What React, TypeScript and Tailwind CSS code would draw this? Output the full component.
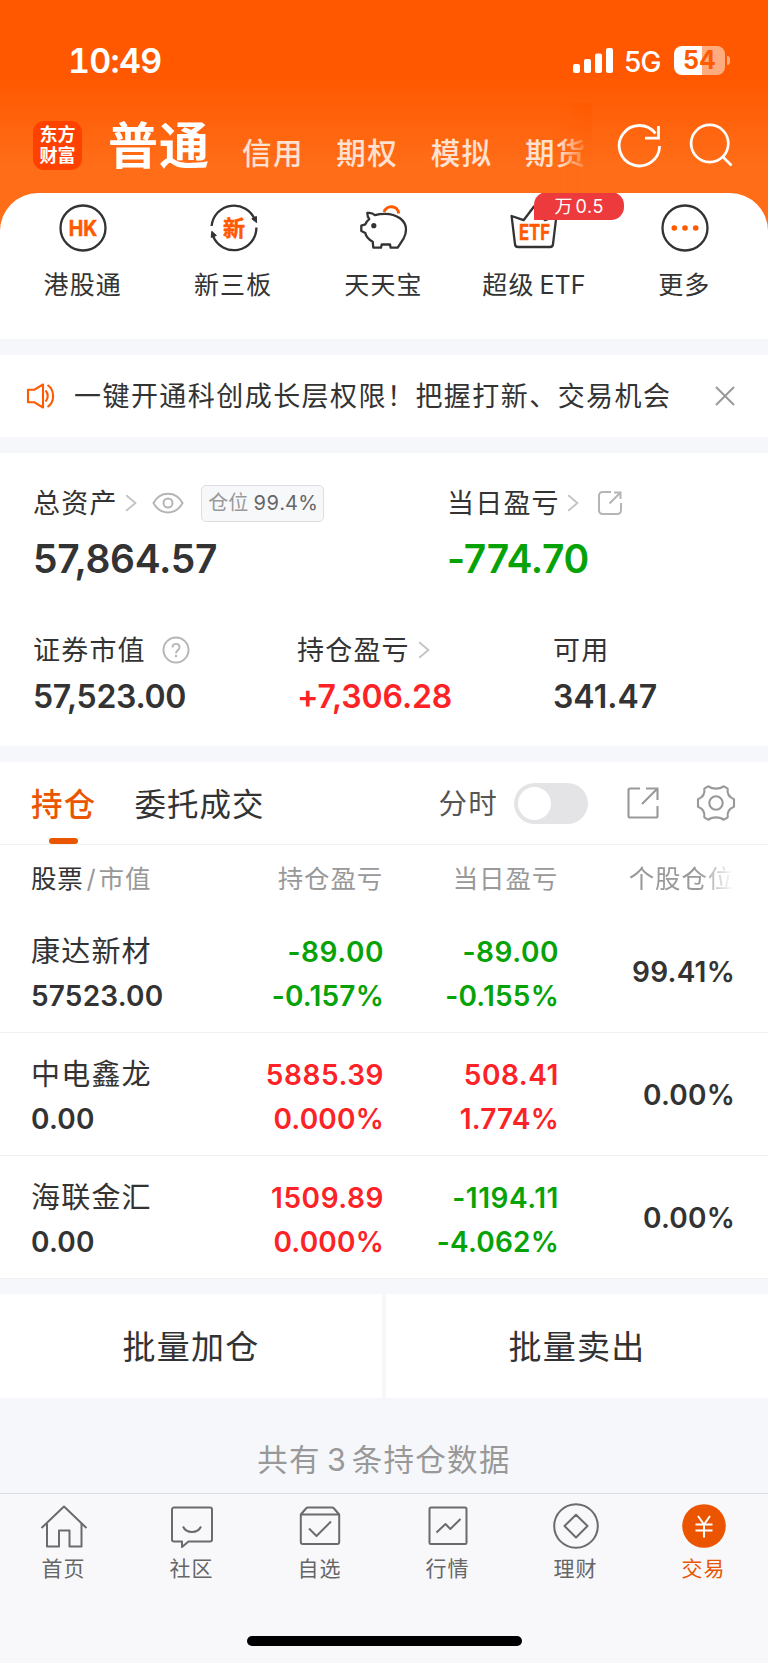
import React from 'react';

type Tone = 'up' | 'down';

const toneClass: Record<Tone, string> = {
  up: 'text-[#fc2226]',
  down: 'text-[#06a206]',
};

const accountTabs = ['信用', '期权', '模拟', '期货'];

const holdings: {
  name: string;
  marketValue: string;
  total: [string, string];
  totalTone: Tone;
  today: [string, string];
  todayTone: Tone;
  ratio: string;
}[] = [
  {
    name: '康达新材',
    marketValue: '57523.00',
    total: ['-89.00', '-0.157%'],
    totalTone: 'down',
    today: ['-89.00', '-0.155%'],
    todayTone: 'down',
    ratio: '99.41%',
  },
  {
    name: '中电鑫龙',
    marketValue: '0.00',
    total: ['5885.39', '0.000%'],
    totalTone: 'up',
    today: ['508.41', '1.774%'],
    todayTone: 'up',
    ratio: '0.00%',
  },
  {
    name: '海联金汇',
    marketValue: '0.00',
    total: ['1509.89', '0.000%'],
    totalTone: 'up',
    today: ['-1194.11', '-4.062%'],
    todayTone: 'down',
    ratio: '0.00%',
  },
];

const Chevron = () => (
  <svg width="12" height="18" viewBox="0 0 12 18" fill="none" stroke="#c4c4c4" strokeWidth="1.9">
    <path d="M1.2 1.2 10.4 9 1.2 16.8" />
  </svg>
);

const iconText = {
  fill: '#ff5a00',
  stroke: '#ff5a00',
  strokeWidth: 0.5,
  textAnchor: 'middle' as const,
  className: "font-['Inter','Noto_Sans_CJK_SC',sans-serif] font-bold",
};

const HkIcon = () => (
  <svg width="50" height="50" viewBox="0 0 50 50" fill="none">
    <circle cx="25" cy="25" r="22.5" stroke="#333" strokeWidth="2.3" />
    <text x="25" y="33" fontSize="21.5" textLength="28.5" lengthAdjust="spacingAndGlyphs" {...iconText}>HK</text>
  </svg>
);

const NewBoardIcon = () => (
  <svg width="50" height="50" viewBox="0 0 50 50" fill="none">
    <path d="M2.6 23A22.5 22.5 0 0 1 46 17M47.4 24.6A22.5 22.5 0 0 1 4 33" stroke="#333" strokeWidth="2.3" />
    <path d="m42.8 15.800 4.600-2.400.2 6.200zM2.800 28.300l4.600 4.200-5.200 1.900z" fill="#333" stroke="#333" />
    <text x="25" y="33" fontSize="22" {...iconText}>新</text>
  </svg>
);

const PiggyIcon = () => (
  <svg width="50" height="50" viewBox="0 0 50 50" fill="none" strokeWidth="2.3" strokeLinejoin="round">
    <path d="M25 9a7.600 7.600 0 0 1 14.800 1.500" stroke="#ff5a00" strokeWidth="3" />
    <path
      d="M16 12.200C14 10.200 11.200 9.500 8.300 10c0 2.200.6 4.300 2 6.200-1.800 1.400-3.200 3-4 5.200l-4 1.300V28l4 2c.7 3.600 3.400 6.500 7.400 8.700l.6 6H22l.7-3.200H31l.7 3.200h7l6-9.400C46.300 32.500 47 29.500 47 26.500 47 17.500 38 10.800 26 10.800c-3.600 0-7 .4-10 1.400z"
      stroke="#333"
    />
    <circle cx="14.800" cy="22.700" r="2.600" fill="#333" />
  </svg>
);

const EtfIcon = () => (
  <svg width="50" height="50" viewBox="0 0 50 50" fill="none">
    <path
      d="M2.600 13 6 41.200a3 3 0 0 0 3 2.800h32a3 3 0 0 0 3-2.800L47.400 13 36 17.200 25 3.500 14.600 17.200z"
      stroke="#333"
      strokeWidth="2.3"
      strokeLinejoin="round"
    />
    <text x="25.500" y="37" fontSize="21.5" textLength="31" lengthAdjust="spacingAndGlyphs" {...iconText}>ETF</text>
  </svg>
);

const MoreIcon = () => (
  <svg width="50" height="50" viewBox="0 0 50 50" fill="none">
    <circle cx="25" cy="25" r="22.5" stroke="#333" strokeWidth="2.3" />
    <circle cx="14.300" cy="25" r="2.8" fill="#ff5a00" />
    <circle cx="25" cy="25" r="2.8" fill="#ff5a00" />
    <circle cx="35.700" cy="25" r="2.8" fill="#ff5a00" />
  </svg>
);

const shortcuts = [
  { icon: HkIcon, label: '港股通' },
  { icon: NewBoardIcon, label: '新三板' },
  { icon: PiggyIcon, label: '天天宝' },
  { icon: EtfIcon, label: '超级', latin: 'ETF', badge: ['万', '0.5'] },
  { icon: MoreIcon, label: '更多' },
];

const HomeIcon = () => (
  <>
    <path d="M1.500 27 24 5.500 46.500 27" />
    <path d="M7 22.500V45.500h12V29.500h10.500v16h12V22.500" />
  </>
);

const CommunityIcon = () => (
  <>
    <path d="M6 6.500h36a2 2 0 0 1 2 2v30a2 2 0 0 1-2 2H20.500L14 46v-5.500H6a2 2 0 0 1-2-2v-30a2 2 0 0 1 2-2z" />
    <path d="M15 25.500c3.400 7.300 14.600 7.300 18 0" />
  </>
);

const WatchlistIcon = () => (
  <>
    <path d="M4.800 13.500 10 7.500q.5-1 1.500-1h25q1 0 1.500 1l5.200 6V41a2 2 0 0 1-2 2H6.800a2 2 0 0 1-2-2zM4.800 13.500h38.400" />
    <path d="m13 27.500 7.500 7.500L35 20.500" />
  </>
);

const MarketIcon = () => (
  <>
    <rect x="5.500" y="6.500" width="37" height="36.500" rx="1.500" />
    <path d="m12.500 31.500 9-8.500 4.800 5L36.500 18" />
  </>
);

const WealthIcon = () => (
  <>
    <circle cx="24" cy="25" r="21.800" />
    <path d="M24 13.800 35.500 25 24 36.500 12.500 25z" />
  </>
);

const TradeIcon = () => (
  <>
    <circle cx="24" cy="25" r="21.800" fill="#eb5500" stroke="none" />
    <path d="m18 15 6 8.500 6-8.500M15.500 23.500h17M15.500 29.500h17M24 23.500v13" stroke="#fff" />
  </>
);

const navItems = [
  { icon: HomeIcon, label: '首页' },
  { icon: CommunityIcon, label: '社区' },
  { icon: WatchlistIcon, label: '自选' },
  { icon: MarketIcon, label: '行情' },
  { icon: WealthIcon, label: '理财' },
  { icon: TradeIcon, label: '交易', active: true },
];

const StatusBar = () => (
  <div className="flex h-[103px] items-start pt-[43px] pl-[68px] pr-[38px]">
    <span className="text-[34px] leading-[36px] font-semibold tabular-nums tracking-[-0.7px]">10:49</span>
    <svg className="ml-auto mt-[5px]" width="40" height="25" viewBox="0 0 40 25" fill="#fff">
      <rect x="0" y="16" width="7" height="9" rx="2" />
      <rect x="11" y="11" width="7" height="14" rx="2" />
      <rect x="22" y="5.500" width="7" height="19.500" rx="2" />
      <rect x="33" y="0" width="7" height="25" rx="2" />
    </svg>
    <span className="ml-[11px] w-[38px] text-[28px] leading-[38px] font-medium tracking-[-0.7px]">5G</span>
    <div className="ml-[12px] mt-[3px] flex h-[29px] w-[51px] items-center justify-center rounded-[8px] bg-[linear-gradient(90deg,#fff_55%,#ffab80_55%)]">
      <span className="text-[25px] leading-none font-bold text-[#ff5a00]">54</span>
    </div>
    <div className="ml-[2px] mt-[13px] h-[9px] w-[3px] rounded-r-full bg-[#ffab80]" />
  </div>
);

const AccountBar = () => (
  <div className="flex h-[90px] items-start pl-[33px]">
    <div className="mt-[18px] flex h-[49px] w-[49px] shrink-0 flex-col items-center justify-center rounded-[11px] bg-[#ff4100] text-[18px] leading-[20.5px] font-bold">
      <span>东方</span>
      <span>财富</span>
    </div>
    <h1 className="ml-[26px] mt-[13px] w-[106px] shrink-0 whitespace-nowrap text-[50px] leading-[60px] font-bold tracking-[1px]">普通</h1>
    <div className="relative flex h-[90px] w-[378px] shrink-0 gap-[32.5px] overflow-hidden pl-[28px] pt-[30px] text-[29.5px] leading-[40px] tracking-[1.4px] text-white/80">
      {accountTabs.map((tab) => (
        <span key={tab} className="shrink-0 font-medium">{tab}</span>
      ))}
      <div className="absolute right-0 top-0 h-full w-[34px] bg-[linear-gradient(180deg,#ff5800,#ff6d18_70%)] [mask-image:linear-gradient(90deg,transparent,#000)]" />
    </div>
    <svg className="ml-[25px] mt-[20px] shrink-0" width="46" height="46" viewBox="0 0 46 46" fill="none" stroke="#fff" strokeWidth="2.8">
      <path d="M42.600 23A20.200 20.200 0 1 1 38.500 10.500" />
      <path d="M41.500 3v12.200H28" />
    </svg>
    <svg className="ml-[25px] mt-[19px] shrink-0" width="46" height="46" viewBox="0 0 46 46" fill="none" stroke="#fff" strokeWidth="2.7">
      <circle cx="21.700" cy="21.500" r="18.600" />
      <path d="m34.500 34.500 9 9" />
    </svg>
  </div>
);

const Shortcuts = () => (
  <div className="bg-[#ff6d18]">
    <div className="grid h-[146px] grid-cols-5 overflow-hidden rounded-t-[38px] bg-white px-[8px] pt-[10px]">
      {shortcuts.map(({ icon: Icon, label, latin, badge }) => (
        <div key={label} className="relative flex flex-col items-center">
          <Icon />
          {badge && (
            <div className="absolute left-[75px] top-[-11px] flex h-[28px] w-[90px] items-center justify-center gap-[3px] rounded-[13px] rounded-bl-none bg-[#ec3a3d] text-[18px] text-white">
              <span>{badge[0]}</span>
              <span className="tracking-[0.6px]">{badge[1]}</span>
            </div>
          )}
          <div className="mt-[12px] mr-px flex gap-[5px] whitespace-nowrap text-[25px] leading-[40px] tracking-[1.1px]">
            {label}
            {latin && <span className="tracking-normal">{latin}</span>}
          </div>
        </div>
      ))}
    </div>
  </div>
);

const Notice = () => (
  <div className="flex h-[82px] items-center bg-white pl-[26px] pr-[33px]">
    <svg width="30" height="28" viewBox="0 0 30 28" fill="none" stroke="#ff5a00" strokeWidth="2.1" strokeLinejoin="round">
      <path d="M2 7.700h6.500L17 2.500v23l-8.500-5.200H2z" />
      <path d="M19.500 8.500c3 3 3 8 0 11M21.500 3c7.500 5 7.500 17 0 22" />
    </svg>
    <p className="ml-[18px] mt-[3px] whitespace-nowrap text-[27px] tracking-[1.45px]">一键开通科创成长层权限！把握打新、交易机会</p>
    <svg className="ml-auto" width="20" height="20" viewBox="0 0 20 20" fill="none" stroke="#999" strokeWidth="2">
      <path d="m1 1 18 18M19 1 1 19" />
    </svg>
  </div>
);

const Assets = () => (
  <div className="h-[293px] bg-white pl-[33px] pt-[30px]">
    <div className="flex">
      <div className="w-[414px]">
        <div className="flex h-[40px] items-center">
          <span className="mt-[2px] text-[27px] tracking-[1.2px]">总资产</span>
          <span className="ml-[7px]"><Chevron /></span>
          <svg className="ml-[14px]" width="34" height="24" viewBox="0 0 34 24" fill="none" stroke="#b5b5b5" strokeWidth="2">
            <path d="M2.500 12C9 -.5 25 -.5 31.500 12 25 24.500 9 24.500 2.500 12z" />
            <circle cx="17" cy="12" r="4.500" />
          </svg>
          <div className="ml-[16px] flex h-[37px] w-[123px] items-center justify-center rounded-[5px] border border-[#dcdee2] bg-[#f7f8fa] pl-[2px] whitespace-nowrap text-[20px] text-[#999]">
            仓位<span className="ml-[5px] tabular-nums tracking-[0.2px] text-[#666]">99.4%</span>
          </div>
        </div>
        <div className="mt-[11px] text-[39px] leading-[50px] font-semibold tracking-[-0.35px]">57,864.57</div>
      </div>
      <div>
        <div className="flex h-[40px] items-center">
          <span className="mt-[2px] text-[27px] tracking-[1.2px]">当日盈亏</span>
          <span className="ml-[7px]"><Chevron /></span>
          <svg className="ml-[18px]" width="26" height="26" viewBox="0 0 26 26" fill="none" stroke="#b5b5b5" strokeWidth="2">
            <path d="M14 2H5.500A3.500 3.500 0 0 0 2 5.500v15A3.500 3.500 0 0 0 5.500 24h15a3.500 3.500 0 0 0 3.500-3.500V13" />
            <path d="M17 2.500h6.500V9M23 3 12.500 13.500" />
          </svg>
        </div>
        <div className={`mt-[11px] text-[39px] leading-[50px] font-semibold tracking-[-0.35px] ${toneClass.down}`}>-774.70</div>
      </div>
    </div>
    <div className="mt-[46px] flex">
      <div className="w-[264px]">
        <div className="flex h-[40px] items-center">
          <span className="mt-[3px] text-[27px] tracking-[1.2px]">证券市值</span>
          <svg className="ml-[16px]" width="28" height="28" viewBox="0 0 28 28" fill="none" stroke="#b5b5b5" strokeWidth="1.9">
            <circle cx="14" cy="14" r="12.500" />
            <path d="M10.500 11.500c0-4.800 7-4.800 7 0 0 2.700-3.500 2.900-3.500 5.800M14 18.800v2.400" />
          </svg>
        </div>
        <div className="mt-[5px] text-[32px] leading-[44px] font-semibold tracking-[-0.3px]">57,523.00</div>
      </div>
      <div className="w-[256px]">
        <div className="flex h-[40px] items-center">
          <span className="mt-[3px] text-[27px] tracking-[1.2px]">持仓盈亏</span>
          <span className="ml-[8px]"><Chevron /></span>
        </div>
        <div className={`mt-[5px] text-[32px] leading-[44px] font-semibold tracking-[-0.1px] ${toneClass.up}`}>+7,306.28</div>
      </div>
      <div>
        <div className="flex h-[40px] items-center pt-[3px] text-[27px] tracking-[1.2px]">可用</div>
        <div className="mt-[5px] text-[32px] leading-[44px] font-semibold">341.47</div>
      </div>
    </div>
  </div>
);

const HoldingTabs = () => (
  <div className="flex h-[83px] items-center border-b border-[#f2f3f5] pl-[31px] pr-[32px]">
    <div className="relative flex h-full items-center pt-[3px] text-[31.5px] font-medium tracking-[1.3px] text-[#eb5500]">
      持仓
      <div className="absolute bottom-0 left-[18px] h-[6px] w-[29px] rounded-[3px] bg-[#eb5500]" />
    </div>
    <span className="ml-[38px] pt-[3px] text-[31.5px] tracking-[1px]">委托成交</span>
    <span className="ml-auto pt-[2px] text-[28.5px] tracking-[1.3px] text-[#555]">分时</span>
    <div className="ml-[16px] flex h-[41px] w-[74px] items-center rounded-full bg-[#e4e4e7] pl-[4px]">
      <div className="h-[33px] w-[33px] rounded-full bg-white" />
    </div>
    <svg className="ml-[38px]" width="34" height="34" viewBox="0 0 34 34" fill="none" stroke="#999" strokeWidth="2.1">
      <path d="M14 2.500H4A1.500 1.500 0 0 0 2.500 4v26A1.500 1.500 0 0 0 4 31.500h26a1.500 1.500 0 0 0 1.500-1.500V20" />
      <path d="M20 2.500h11.500V14M31.500 2.500 16 18" />
    </svg>
    <svg className="ml-[36px]" width="40" height="40" viewBox="0 0 40 40" fill="none" stroke="#999" strokeWidth="2.1" strokeLinejoin="round">
      <path d="M12.500 3.200c3.500 3.200 11.500 3.200 15 0l4.200 2.500c-.8 5 1.300 8.600 6.300 10.500v7.600c-5 1.900-7.100 5.500-6.300 10.500l-4.200 2.500c-3.500-3.200-11.500-3.200-15 0l-4.200-2.500c.8-5-1.300-8.600-6.300-10.500v-7.600c5-1.900 7.100-5.500 6.300-10.500z" />
      <circle cx="20" cy="20" r="6.700" />
    </svg>
  </div>
);

const HoldingTable = () => (
  <div className="bg-white">
    <div className="flex h-[65px] items-center pl-[31px] pt-[3px] text-[25.5px] tracking-[0.8px] text-[#999]">
      <div className="w-[200px]">
        <span className="text-[#333]">股票</span>
        <span className="ml-[3px] mr-[2px]">/</span>市值
      </div>
      <div className="w-[152px] text-right">持仓盈亏</div>
      <div className="w-[175px] text-right">当日盈亏</div>
      <div className="w-[176px] text-right [mask-image:linear-gradient(90deg,#000_80%,transparent)]">个股仓位</div>
    </div>
    {holdings.map((item) => (
      <div key={item.name} className="flex h-[123px] border-b border-[#f0f1f3] pl-[31px] pt-[20px] text-[28px] leading-[44px] font-semibold">
        <div className="w-[201px]">
          <div className="text-[29px] font-normal tracking-[1.2px]">{item.name}</div>
          <div className="tracking-[0.2px]">{item.marketValue}</div>
        </div>
        <div className={`w-[152px] text-right ${toneClass[item.totalTone]}`}>
          <div className="tracking-[0.55px]">{item.total[0]}</div>
          <div className="tracking-[0.2px]">{item.total[1]}</div>
        </div>
        <div className={`w-[175px] text-right ${toneClass[item.todayTone]}`}>
          <div className="tracking-[0.55px]">{item.today[0]}</div>
          <div className="tracking-[0.2px]">{item.today[1]}</div>
        </div>
        <div className="w-[176px] pt-[20px] text-right tracking-[0.2px]">{item.ratio}</div>
      </div>
    ))}
  </div>
);

const BottomNav = () => (
  <div className="h-[170px] border-t border-[#dcdde0] bg-[#f8f8fb]">
    <div className="grid h-[142px] grid-cols-6">
      {navItems.map(({ icon: Icon, label, active }) => (
        <div key={label} className={`flex flex-col items-center pt-[7px] ${active ? 'text-[#eb5500]' : 'text-[#666]'}`}>
          <svg width="48" height="48" viewBox="0 0 48 48" fill="none" stroke="#6b6b6b" strokeWidth="2" strokeLinejoin="round">
            <Icon />
          </svg>
          <span className="mt-[5px] mr-px text-[21px] leading-[30px] tracking-[0.9px]">{label}</span>
        </div>
      ))}
    </div>
    <div className="mx-auto h-[10px] w-[275px] rounded-full bg-black" />
  </div>
);

const App = () => {
  return (
    <div className="flex h-[1663px] w-[768px] flex-col overflow-hidden bg-[#f6f7fa] font-['Inter','Noto_Sans_CJK_SC',sans-serif] text-[#333]">
      <header className="h-[193px] bg-[linear-gradient(180deg,#ff5800_40%,#ff6d18_86%)] text-white">
        <StatusBar />
        <AccountBar />
      </header>
      <Shortcuts />
      <div className="mt-[16px]"><Notice /></div>
      <div className="mt-[16px]"><Assets /></div>
      <div className="mt-[16px] bg-white">
        <HoldingTabs />
        <HoldingTable />
      </div>
      <div className="mt-[15px] grid h-[104px] grid-cols-2 gap-[4px] text-[33px] tracking-[1.3px]">
        <button className="bg-white pt-[4px]">批量加仓</button>
        <button className="bg-white pt-[4px]">批量卖出</button>
      </div>
      <div className="flex flex-1 items-center justify-center gap-[6px] pt-[28px] text-[30.5px] tracking-[1.3px] text-[#999]">
        <span>共有</span>
        <span className="tracking-normal">3</span>
        <span>条持仓数据</span>
      </div>
      <BottomNav />
    </div>
  );
};

export default App;
